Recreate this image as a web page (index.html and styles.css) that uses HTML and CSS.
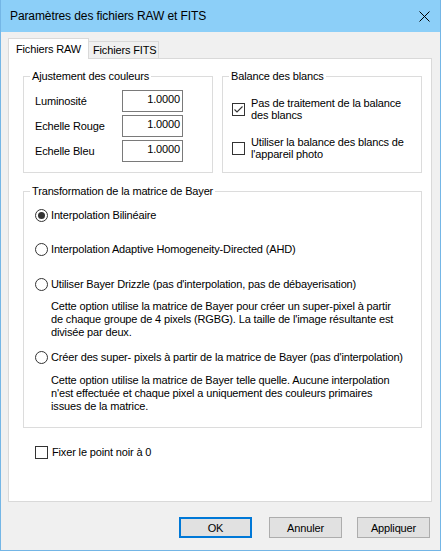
FILE: index.html
```html
<!DOCTYPE html>
<html lang="fr">
<head>
<meta charset="utf-8">
<title>Paramètres des fichiers RAW et FITS</title>
<link rel="stylesheet" href="styles.css">
</head>
<body>
<div class="window">
  <div class="titlebar">
    <span class="title">Paramètres des fichiers RAW et FITS</span>
    <svg class="close" width="11" height="11" viewBox="0 0 11 11"><path d="M0.5 0.5 L10.5 10.5 M10.5 0.5 L0.5 10.5" stroke="#000" stroke-width="1" fill="none"/></svg>
  </div>
  <div class="client">
    <div class="tabs">
      <div class="tab active">Fichiers RAW</div>
      <div class="tab">Fichiers FITS</div>
    </div>
    <div class="panel">
      <div class="toprow">
        <fieldset class="group g1">
          <legend>Ajustement des couleurs</legend>
          <div class="fields">
            <div class="field"><span class="label">Luminosité</span><span class="input">1.0000</span></div>
            <div class="field"><span class="label">Echelle Rouge</span><span class="input">1.0000</span></div>
            <div class="field"><span class="label">Echelle Bleu</span><span class="input">1.0000</span></div>
          </div>
        </fieldset>
        <fieldset class="group g2">
          <legend>Balance des blancs</legend>
          <div class="checks">
            <div class="check">
              <span class="box"><svg width="11" height="11" viewBox="0 0 11 11"><path d="M1.5 5.5 L4 8 L9.5 2.5" stroke="#333" stroke-width="1.1" fill="none"/></svg></span>
              <span class="ctext">Pas de traitement de la balance<br>des blancs</span>
            </div>
            <div class="check">
              <span class="box"></span>
              <span class="ctext">Utiliser la balance des blancs de<br>l'appareil photo</span>
            </div>
          </div>
        </fieldset>
      </div>
      <fieldset class="group g3">
        <legend>Transformation de la matrice de Bayer</legend>
        <div class="radios">
          <div class="radio r1">
            <svg class="rb" width="13" height="13" viewBox="0 0 13 13"><circle cx="6.5" cy="6.5" r="6" stroke="#333" fill="#fff"/><circle cx="6.5" cy="6.5" r="3.5" fill="#333"/></svg>
            <span>Interpolation Bilinéaire</span>
          </div>
          <div class="radio r2">
            <svg class="rb" width="13" height="13" viewBox="0 0 13 13"><circle cx="6.5" cy="6.5" r="6" stroke="#333" fill="#fff"/></svg>
            <span>Interpolation Adaptive Homogeneity-Directed (AHD)</span>
          </div>
          <div class="radio r3">
            <svg class="rb" width="13" height="13" viewBox="0 0 13 13"><circle cx="6.5" cy="6.5" r="6" stroke="#333" fill="#fff"/></svg>
            <span>Utiliser Bayer Drizzle (pas d'interpolation, pas de débayerisation)</span>
          </div>
          <p class="desc d1">Cette option utilise la matrice de Bayer pour créer un super-pixel à partir<br>de chaque groupe de 4 pixels (RGBG). La taille de l'image résultante est<br>divisée par deux.</p>
          <div class="radio r4">
            <svg class="rb" width="13" height="13" viewBox="0 0 13 13"><circle cx="6.5" cy="6.5" r="6" stroke="#333" fill="#fff"/></svg>
            <span>Créer des super- pixels à partir de la matrice de Bayer (pas d'interpolation)</span>
          </div>
          <p class="desc d2">Cette option utilise la matrice de Bayer telle quelle. Aucune interpolation<br>n'est effectuée et chaque pixel a uniquement des couleurs primaires<br>issues de la matrice.</p>
        </div>
      </fieldset>
      <div class="check fix">
        <span class="box"></span>
        <span class="ctext">Fixer le point noir à 0</span>
      </div>
    </div>
    <div class="buttons">
      <button class="btn default">OK</button>
      <button class="btn b2">Annuler</button>
      <button class="btn">Appliquer</button>
    </div>
  </div>
</div>
</body>
</html>
```

FILE: styles.css
```css
* { box-sizing: border-box; }
html, body { margin: 0; padding: 0; }
body {
  width: 441px;
  height: 551px;
  overflow: hidden;
  background: #f0f0f0;
  font-family: "Liberation Sans", Arial, sans-serif;
  font-size: 11px;
  line-height: 13px;
  letter-spacing: -0.15px;
  color: #000;
}
.window {
  width: 441px;
  height: 551px;
  display: flex;
  flex-direction: column;
  border: 1px solid #74b6e6;
  border-top: none;
  background: #f0f0f0;
}
.titlebar {
  height: 32px;
  flex: none;
  display: flex;
  align-items: center;
  background: #8ccff8;
  padding-left: 9px;
}
.title {
  font-size: 12px;
  letter-spacing: -0.1px;
  color: #000;
}
.close {
  margin-left: auto;
  margin-right: 10px;
}
.client {
  flex: 1;
  display: flex;
  flex-direction: column;
}
.tabs {
  display: flex;
  align-items: flex-end;
  padding: 6px 0 0 7px;
}
.tab {
  position: relative;
  height: 17px;
  width: 70px;
  padding-left: 4px;
  display: flex;
  align-items: center;
  white-space: nowrap;
  border: 1px solid #d9d9d9;
  border-left: none;
  border-bottom: none;
  background: #f0f0f0;
}
.tab.active {
  z-index: 1;
  height: 21px;
  width: 81px;
  padding-left: 7px;
  margin-bottom: -1px;
  border-left: 1px solid #d9d9d9;
  background: #fff;
}
.panel {
  height: 444px;
  margin: 0 8px 0 7px;
  border: 1px solid #d9d9d9;
  background: #fff;
  padding: 11px 9px 0 14px;
}
.toprow {
  display: flex;
  gap: 9px;
}
.group {
  margin: 0;
  padding: 0;
  min-width: 0;
  border: 1px solid #dcdcdc;
}
.group legend {
  margin-left: 6px;
  padding: 0 2px;
  line-height: 13px;
}
.g1 { width: 190px; height: 103px; }
.g2 { flex: 1; height: 103px; }
.g3 { margin-top: 12px; height: 243px; }

.fields {
  padding: 7px 0 0 11px;
  display: flex;
  flex-direction: column;
  gap: 3px;
}
.field {
  display: flex;
  align-items: center;
  height: 22px;
}
.label { width: 87px; }
.input {
  width: 61px;
  height: 22px;
  border: 1px solid #7a7a7a;
  background: #fff;
  text-align: right;
  padding: 2px 2px 0 0;
}

.checks {
  padding: 14px 0 0 9px;
  display: flex;
  flex-direction: column;
  gap: 15px;
}
.check {
  display: flex;
  align-items: center;
  gap: 6px;
  white-space: nowrap;
}
.check .ctext { line-height: 12px; }
.box {
  width: 13px;
  height: 13px;
  flex: none;
  border: 1px solid #333;
  background: #fff;
  display: flex;
  align-items: center;
  justify-content: center;
}
.fix {
  margin-top: 18px;
  padding-left: 12px;
  gap: 4px;
}
.fix .ctext { line-height: 13px; }

.radios {
  padding: 11px 0 0 11px;
  display: flex;
  flex-direction: column;
  white-space: nowrap;
}
.radio {
  display: flex;
  align-items: center;
  gap: 3px;
  height: 13px;
}
.rb { flex: none; }
.r2 { margin-top: 21px; }
.r3 { margin-top: 22px; }
.r4 { margin-top: 12px; }
.desc {
  margin: 0;
  padding-left: 16px;
  line-height: 13px;
}
.d1 { margin-top: 9px; }
.d2 { margin-top: 10px; }

.buttons {
  display: flex;
  justify-content: flex-end;
  margin-top: 15px;
  padding-right: 10px;
}
.btn {
  width: 73px;
  height: 21px;
  margin: 0;
  padding: 0;
  font-family: "Liberation Sans", Arial, sans-serif;
  font-size: 11px;
  letter-spacing: -0.15px;
  color: #000;
  background: #e1e1e1;
  border: 1px solid #adadad;
}
.btn.default {
  border: 2px solid #0078d7;
  margin-right: 17px;
}
.btn.b2 { margin-right: 15px; }
```
